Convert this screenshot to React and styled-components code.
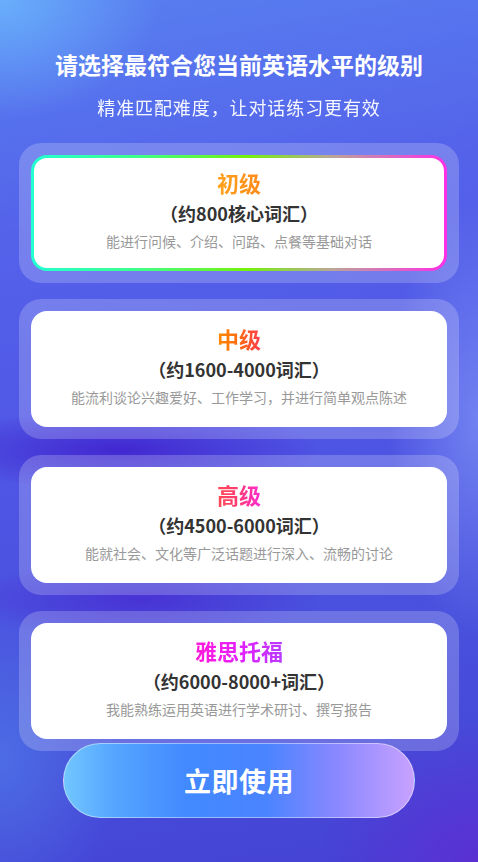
import React, { useState } from "react";
import styled, { createGlobalStyle } from "styled-components";

const GlobalStyle = createGlobalStyle`
  html, body {
    margin: 0;
    padding: 0;
  }
  body {
    font-family: "Noto Sans CJK SC", "Noto Sans", sans-serif;
  }
  * {
    box-sizing: border-box;
  }
`;

const Page = styled.div`
  min-height: 862px;
  display: flex;
  flex-direction: column;
  background:
    radial-gradient(ellipse 160px 120px at 0% 0%, rgba(110, 190, 255, 0.75), transparent 100%),
    radial-gradient(ellipse 90px 220px at 100% 420px, rgba(150, 175, 255, 0.5), transparent 100%),
    radial-gradient(ellipse 200px 40px at 120px 450px, rgba(60, 20, 200, 0.7), transparent 100%),
    radial-gradient(ellipse 180px 40px at 140px 600px, rgba(70, 30, 205, 0.6), transparent 100%),
    radial-gradient(ellipse 120px 160px at 0% 760px, rgba(80, 130, 235, 0.6), transparent 100%),
    radial-gradient(ellipse 160px 140px at 100% 100%, rgba(100, 40, 210, 0.7), transparent 100%),
    linear-gradient(170deg, #5880f0 0%, #5462ea 25%, #4f55e4 50%, #4850dc 75%, #4442d4 100%);
`;

const Header = styled.header`
  padding-top: 49px;
  display: flex;
  flex-direction: column;
  align-items: center;
  color: #fff;
`;

const Title = styled.div`
  font-size: 23px;
  line-height: 30px;
  font-weight: 700;
  white-space: nowrap;
`;

const Subtitle = styled.div`
  margin-top: 15px;
  font-size: 18px;
  line-height: 26px;
  letter-spacing: 0.9px;
  font-weight: 400;
  opacity: 0.95;
`;

const List = styled.div`
  margin-top: 23px;
  padding: 0 19px;
  display: flex;
  flex-direction: column;
  gap: 16px;
`;

const Frame = styled.div`
  padding: 12px;
  border-radius: 22px;
  background: rgba(255, 255, 255, 0.2);
  cursor: pointer;
`;

const Card = styled.div`
  height: 116px;
  border-radius: 16px;
  border: 3px solid transparent;
  background: ${(p) =>
    p.$active
      ? "linear-gradient(#fff, #fff) padding-box, linear-gradient(90deg, #22ffd2 0%, #3dff8c 25%, #74f20a 52%, #b9a796 72%, #ff2ee6 100%) border-box"
      : "#fff"};
  display: flex;
  flex-direction: column;
  align-items: center;
  padding-top: 9px;
`;

const Level = styled.div`
  font-size: 22px;
  line-height: 30px;
  font-weight: 700;
  background: ${(p) => p.$gradient};
  -webkit-background-clip: text;
  background-clip: text;
  color: transparent;
`;

const Vocab = styled.div`
  margin-top: 3px;
  font-size: 18px;
  line-height: 26px;
  font-weight: 700;
  color: #333;
`;

const Desc = styled.div`
  margin-top: 5px;
  font-size: 14px;
  line-height: 20px;
  color: #999;
`;

const Button = styled.button`
  position: relative;
  align-self: center;
  margin-top: -8px;
  width: 352px;
  height: 75px;
  border-radius: 38px;
  border: 1px solid rgba(255, 255, 255, 0.45);
  background: linear-gradient(90deg, #72c6ff 0%, #55a6ff 14%, #4289ff 35%, #4a84ff 58%, #8a88ff 78%, #c8a2ff 100%);
  color: #fff;
  font-family: inherit;
  font-size: 27px;
  font-weight: 700;
  letter-spacing: 0.5px;
  cursor: pointer;
`;

const levels = [
  {
    name: "初级",
    vocab: "（约800核心词汇）",
    desc: "能进行问候、介绍、问路、点餐等基础对话",
    gradient: "linear-gradient(90deg, #ffa21a, #ff8a1a)",
  },
  {
    name: "中级",
    vocab: "（约1600-4000词汇）",
    desc: "能流利谈论兴趣爱好、工作学习，并进行简单观点陈述",
    gradient: "linear-gradient(90deg, #ff8a00, #ff6a10 50%, #ff3a4e)",
  },
  {
    name: "高级",
    vocab: "（约4500-6000词汇）",
    desc: "能就社会、文化等广泛话题进行深入、流畅的讨论",
    gradient: "linear-gradient(90deg, #ff4a52, #ff3a78 50%, #ff2ad4)",
  },
  {
    name: "雅思托福",
    vocab: "（约6000-8000+词汇）",
    desc: "我能熟练运用英语进行学术研讨、撰写报告",
    gradient: "linear-gradient(90deg, #ff1ad8, #e020ff 55%, #b83cff)",
  },
];

export default function App() {
  const [selected, setSelected] = useState(0);

  return (
    <Page>
      <GlobalStyle />
      <Header>
        <Title>请选择最符合您当前英语水平的级别</Title>
        <Subtitle>精准匹配难度，让对话练习更有效</Subtitle>
      </Header>
      <List>
        {levels.map((lv, i) => (
          <Frame key={lv.name} onClick={() => setSelected(i)}>
            <Card $active={selected === i}>
              <Level $gradient={lv.gradient}>{lv.name}</Level>
              <Vocab>{lv.vocab}</Vocab>
              <Desc>{lv.desc}</Desc>
            </Card>
          </Frame>
        ))}
      </List>
      <Button>立即使用</Button>
    </Page>
  );
}
